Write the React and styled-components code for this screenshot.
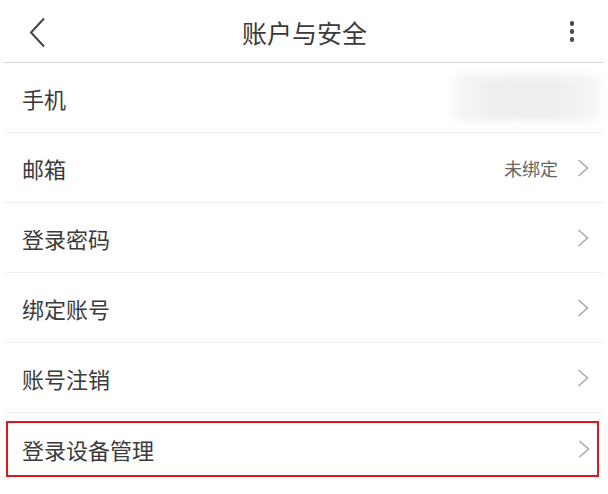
import React from 'react';
import styled, { createGlobalStyle } from 'styled-components';

const GlobalStyle = createGlobalStyle`
  html, body {
    margin: 0;
    padding: 0;
    background: #fff;
  }
  body {
    font-family: 'Noto Sans CJK SC', 'Noto Sans', sans-serif;
    color: #333;
  }
`;

const Page = styled.div`
  width: 608px;
  height: 494px;
  background: #fff;
  overflow: hidden;
`;

const Header = styled.div`
  height: 62px;
  display: grid;
  grid-template-columns: 80px 1fr 80px;
  align-items: center;
  margin: 0 4px 0 3px;
  border-bottom: 1px solid #d9d9d9;
`;

const BackButton = styled.div`
  display: flex;
  align-items: center;
  padding-left: 25px;
  padding-top: 2px;
`;

const Title = styled.div`
  text-align: center;
  font-size: 25px;
  color: #3a3a3a;
  line-height: 1;
  padding-top: 2px;
  padding-left: 2px;
`;

const MoreButton = styled.div`
  display: flex;
  flex-direction: column;
  align-items: flex-end;
  gap: 3.5px;
  padding-right: 30px;
  padding-top: 1px;
`;

const Dot = styled.span`
  width: 4.5px;
  height: 4.5px;
  border-radius: 50%;
  background: #444;
`;

const List = styled.div`
  display: flex;
  flex-direction: column;
`;

const Row = styled.div`
  height: 69px;
  display: flex;
  align-items: center;
  justify-content: space-between;
  margin: 0 4px;
  padding: 0 15px 0 18px;
  border-bottom: 1px solid #f1f1f1;
  box-sizing: content-box;
`;

const HighlightWrap = styled.div`
  padding: 8px 9px 0 6px;
`;

const HighlightRow = styled.div`
  height: 52px;
  border: 2px solid #e8141b;
  display: flex;
  align-items: center;
  justify-content: space-between;
  padding: 0 7px 0 14px;
`;

const Label = styled.span`
  font-size: 22px;
  color: #3a3a3a;
  line-height: 1;
`;

const Right = styled.div`
  display: flex;
  align-items: center;
  gap: 19px;
`;

const Hint = styled.span`
  font-size: 18px;
  color: #666;
  line-height: 1;
`;

const Masked = styled.div`
  width: 156px;
  height: 46px;
  margin-right: -15px;
  border-radius: 6px;
  background:
    linear-gradient(90deg, transparent 0%, #f6f6f6 8%, #efefef 25%, #eeeeee 68%, #f3f3f3 85%, #f8f8f8 96%, transparent 100%);
  filter: blur(4px);
`;

const Chevron = () => (
  <svg width="12" height="18" viewBox="0 0 12 18">
    <path d="M1.5 1 L10.5 9 L1.5 17" fill="none" stroke="#a8a8a8" strokeWidth="1.5" />
  </svg>
);

const BackIcon = () => (
  <svg width="18" height="31" viewBox="0 0 18 31">
    <path d="M16 1.5 L3 15.5 L16 29.5" fill="none" stroke="#444" strokeWidth="2" />
  </svg>
);

const items = [
  { label: '邮箱', hint: '未绑定' },
  { label: '登录密码' },
  { label: '绑定账号' },
  { label: '账号注销' },
];

export default function App() {
  return (
    <Page>
      <GlobalStyle />
      <Header>
        <BackButton><BackIcon /></BackButton>
        <Title>账户与安全</Title>
        <MoreButton>
          <Dot /><Dot /><Dot />
        </MoreButton>
      </Header>
      <List>
        <Row>
          <Label>手机</Label>
          <Masked />
        </Row>
        {items.map(item => (
          <Row key={item.label}>
            <Label>{item.label}</Label>
            <Right>
              {item.hint && <Hint>{item.hint}</Hint>}
              <Chevron />
            </Right>
          </Row>
        ))}
        <HighlightWrap>
          <HighlightRow>
            <Label>登录设备管理</Label>
            <Chevron />
          </HighlightRow>
        </HighlightWrap>
      </List>
    </Page>
  );
}
